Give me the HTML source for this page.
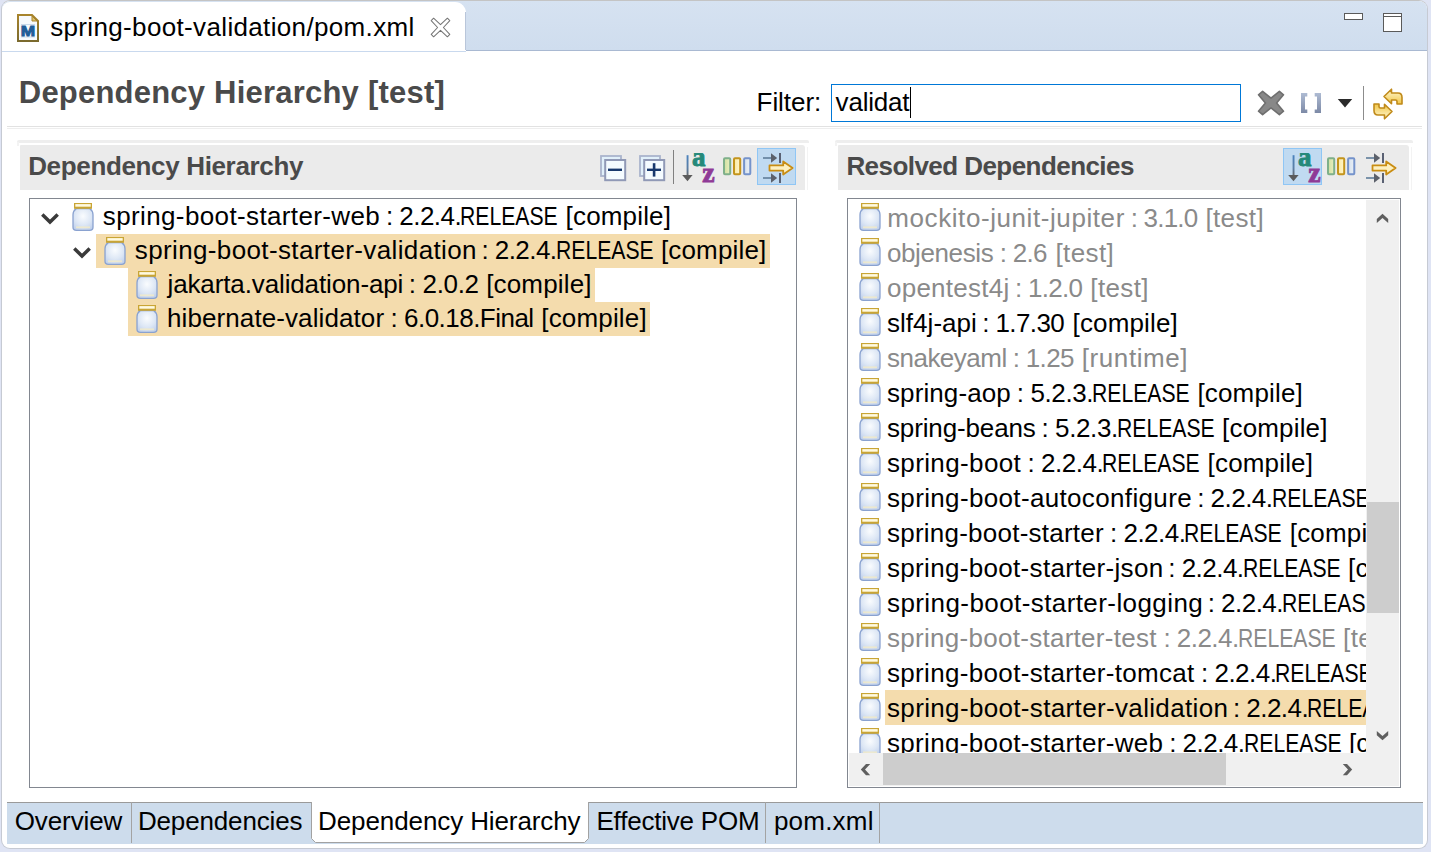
<!DOCTYPE html>
<html><head><meta charset="utf-8"><title>spring-boot-validation/pom.xml</title>
<style>
html,body{margin:0;padding:0;}
body{width:1431px;height:852px;position:relative;overflow:hidden;background:#dfe4f4;font-family:"Liberation Sans",sans-serif;}
.abs{position:absolute;}
.t{position:absolute;white-space:pre;line-height:0;height:0;display:block;}
.jar{position:absolute;}
.clip{position:absolute;overflow:hidden;}
</style></head><body>
<svg width="0" height="0" style="position:absolute">
<defs>
<radialGradient id="jg" cx="0.5" cy="0.35" r="0.75"><stop offset="0" stop-color="#fafcfe"/><stop offset="0.55" stop-color="#dde7f5"/><stop offset="1" stop-color="#bccdea"/></radialGradient>
<linearGradient id="cg1" x1="0" x2="1"><stop offset="0" stop-color="#cfe0a0"/><stop offset="1" stop-color="#e9efc0"/></linearGradient>
<linearGradient id="cg2" x1="0" x2="1"><stop offset="0" stop-color="#fbe9a0"/><stop offset="1" stop-color="#fff6d0"/></linearGradient>
<linearGradient id="cg3" x1="0" x2="1"><stop offset="0" stop-color="#d5e0ee"/><stop offset="1" stop-color="#eaf0f5"/></linearGradient>
<linearGradient id="sg" x1="0" x2="0" y1="0" y2="1"><stop offset="0" stop-color="#4a82bd"/><stop offset="0.6" stop-color="#5a7ea6"/><stop offset="1" stop-color="#666"/></linearGradient>
<g id="jar">
<path d="M4.2 5.6 C1.9 7.2 1 9.2 1 11.8 L1 24.2 C1 26.3 2.5 27.3 4.4 27.3 L17.6 27.3 C19.5 27.3 21 26.3 21 24.2 L21 11.8 C21 9.2 20.1 7.2 17.8 5.6 Z" fill="url(#jg)" stroke="#8aa2d0" stroke-width="1.3"/>
<rect x="4" y="23.4" width="14" height="1.8" fill="#f6ecc4" opacity="0.75"/>
<rect x="2" y="0" width="18" height="5.8" fill="#c9a535"/>
<rect x="3.3" y="1.1" width="15.4" height="2.6" fill="#fffae0"/>
</g>
</defs></svg>

<div class="abs" style="left:1px;top:0;width:1427px;height:849px;background:#fff;border:1px solid #c6cad3;border-top-color:#c4c4c4;box-sizing:border-box;border-radius:9px;"></div>
<div class="abs" style="left:2px;top:1px;width:1425px;height:49px;background:linear-gradient(#d6e2f1,#cfddee);border-radius:8px 8px 0 0;"></div>
<div class="abs" style="left:2px;top:50px;width:1425px;height:1px;background:#a9b9d2"></div>
<div class="abs" style="left:2px;top:2px;width:464px;height:50px;background:#fff;border-radius:8px 11px 0 0;"></div>
<div class="abs" style="left:465px;top:12px;width:1px;height:38px;background:#b9c6da"></div>
<div class="abs" style="left:2px;top:51px;width:464px;height:1px;background:#c9d9ee"></div>
<svg class="abs" style="left:17px;top:14px" width="22" height="28" viewBox="0 0 22 28">
<defs><linearGradient id="fb" x1="0" x2="0" y1="0" y2="1"><stop offset="0" stop-color="#a8842c"/><stop offset="1" stop-color="#7b6a2e"/></linearGradient></defs>
<path d="M1 1 L15 1 L21 7 L21 27 L1 27 Z" fill="#f7f9fc" stroke="url(#fb)" stroke-width="2"/>
<path d="M15 2 L15 7 L20 7 Z" fill="#dcc06c" stroke="#a8842c" stroke-width="1"/>
<rect x="4" y="10" width="14" height="1" fill="#c9d9ea"/><rect x="4" y="22.5" width="14" height="1" fill="#c9d9ea"/>
<text x="3.8" y="22" font-family="Liberation Sans, sans-serif" font-weight="bold" font-size="14" textLength="14.4" lengthAdjust="spacingAndGlyphs" fill="#1f5c97" stroke="#1f5c97" stroke-width="0.9">M</text>
</svg>
<span class="t" style="left:50.2px;top:26.99px;font-size:26px;color:#000;font-weight:normal;letter-spacing:0.348px;">spring-boot-validation/pom.xml</span>
<svg class="abs" style="left:430px;top:17px" width="21" height="21" viewBox="0 0 21 21">
<path d="M1.2 3.6 L3.6 1.2 L10.5 7.6 L17.4 1.2 L19.8 3.6 L13.4 10.5 L19.8 17.4 L17.4 19.8 L10.5 13.4 L3.6 19.8 L1.2 17.4 L7.6 10.5 Z" fill="#fff" stroke="#757575" stroke-width="1.05" stroke-linejoin="round"/>
</svg>
<div class="abs" style="left:1344px;top:13px;width:19px;height:7px;background:#fff;border:1px solid #5a5a5a;box-sizing:border-box"></div>
<div class="abs" style="left:1383px;top:13px;width:19px;height:19px;background:#fff;border:1px solid #5a5a5a;box-sizing:border-box"></div>
<div class="abs" style="left:1383px;top:16px;width:19px;height:1px;background:#5a5a5a"></div>
<span class="t" style="left:18.8px;top:92.76px;font-size:31px;color:#4a4a4a;font-weight:bold;letter-spacing:0.215px;">Dependency Hierarchy [test]</span>
<span class="t" style="left:756.6px;top:101.99px;font-size:26px;color:#000;font-weight:normal;letter-spacing:-0.067px;">Filter:</span>
<div class="abs" style="left:831px;top:84px;width:410px;height:38px;box-sizing:border-box;border:1px solid #0078d7;background:#fff"></div>
<span class="t" style="left:835.6px;top:101.99px;font-size:26px;color:#000;font-weight:normal;letter-spacing:-0.2px;">validat</span>
<div class="abs" style="left:910px;top:87px;width:1px;height:31px;background:#000"></div>
<svg class="abs" style="left:1257px;top:90px" width="28" height="26" viewBox="0 0 28 26">
<path d="M1.5 4.8 L5.6 1.3 L14 8.2 L22.4 1.3 L26.5 4.8 L19.6 13 L26.5 21.2 L22.4 24.7 L14 17.8 L5.6 24.7 L1.5 21.2 L8.4 13 Z" fill="#888888" stroke="#6f6f6f" stroke-width="1.6" stroke-linejoin="round"/>
</svg>
<svg class="abs" style="left:1300px;top:92px" width="22" height="22" viewBox="0 0 22 22">
<defs><linearGradient id="bk" x1="0" x2="0" y1="0" y2="1"><stop offset="0" stop-color="#aebbd3"/><stop offset="1" stop-color="#7c89a6"/></linearGradient></defs>
<path d="M1 1 L7.3 1 L7.3 4.4 L5 4.4 L5 17.6 L7.3 17.6 L7.3 21 L1 21 Z" fill="url(#bk)"/>
<path d="M21 1 L14.7 1 L14.7 4.4 L17 4.4 L17 17.6 L14.7 17.6 L14.7 21 L21 21 Z" fill="url(#bk)"/>
</svg>
<svg class="abs" style="left:1337px;top:98px" width="16" height="10" viewBox="0 0 16 10"><path d="M0.8 1 L15.2 1 L8 9.4 Z" fill="#2a2a2a"/></svg>
<div class="abs" style="left:1363px;top:86px;width:1px;height:34px;background:#8c8c8c"></div>
<svg class="abs" style="left:1373px;top:88px" width="30" height="32" viewBox="0 0 30 32">
<defs><linearGradient id="rf" x1="0" x2="0" y1="0" y2="1"><stop offset="0" stop-color="#fff8d2"/><stop offset="1" stop-color="#f1c648"/></linearGradient></defs>
<path id="rfa" d="M11 8.5 L18.5 1.2 L18.5 5 L25 5 C27.5 5 29 6.8 29 9.5 L29 16 L24 16 L24 13.5 C24 12.5 23.5 12 22.5 12 L18.5 12 L18.5 15.8 Z" fill="url(#rf)" stroke="#c08a1a" stroke-width="1.6" stroke-linejoin="round"/>
<use href="#rfa" transform="rotate(180 15 16)"/>
</svg>
<div class="abs" style="left:7px;top:126px;width:1415px;height:1px;background:#e2e2e2"></div>
<div class="abs" style="left:7px;top:128px;width:1415px;height:1px;background:#eeeeee"></div>
<div class="abs" style="left:17px;top:140px;width:792px;height:2.5px;background:#eeeeee;border-radius:2px 2px 0 0"></div>
<div class="abs" style="left:17px;top:142px;width:2px;height:4px;background:#f3f3f3"></div>
<div class="abs" style="left:20px;top:145px;width:785px;height:45px;background:#ebebeb;border-radius:1px 3px 0 0"></div>
<div class="abs" style="left:806.5px;top:147px;width:1px;height:43px;background:#f3f3f3"></div>
<span class="t" style="left:28.2px;top:165.99px;font-size:26px;color:#4a4a4a;font-weight:bold;letter-spacing:-0.347px;">Dependency Hierarchy</span>
<svg class="abs" style="left:599.8px;top:155px" width="27" height="27" viewBox="0 0 27 27">
<rect x="1" y="1" width="20" height="20" fill="#e1f0fa" stroke="#aab4cd" stroke-width="1.8"/>
<rect x="5.2" y="5" width="20" height="20.2" fill="#f4fbff" stroke="#9099b6" stroke-width="2"/>
<rect x="8" y="13.6" width="14" height="2.4" fill="#17386d"/></svg>
<svg class="abs" style="left:638.7px;top:155px" width="27" height="27" viewBox="0 0 27 27">
<rect x="1" y="1" width="20" height="20" fill="#e1f0fa" stroke="#aab4cd" stroke-width="1.8"/>
<rect x="5.2" y="5" width="20" height="20.2" fill="#f4fbff" stroke="#9099b6" stroke-width="2"/>
<rect x="8" y="13.6" width="14" height="2.4" fill="#17386d"/><rect x="13.8" y="8.2" width="2.6" height="13.4" fill="#17386d"/></svg>
<div class="abs" style="left:673px;top:150px;width:1px;height:34px;background:#808080"></div>
<svg class="abs" style="left:682px;top:153px" width="34" height="31" viewBox="0 0 34 31">
<rect x="4.6" y="2.2" width="1.9" height="21" fill="url(#sg)"/>
<path d="M0.2 22 L10.6 22 L5.5 28.2 Z" fill="#5b5b5b"/>
<text x="10" y="12.9" font-family="Liberation Serif, serif" font-weight="bold" font-size="27" fill="#25897a" stroke="#25897a" stroke-width="0.9">a</text>
<text x="20.2" y="29.4" font-family="Liberation Serif, serif" font-weight="bold" font-size="28" fill="#8f3a96" stroke="#8f3a96" stroke-width="0.9">z</text>
</svg>
<svg class="abs" style="left:723px;top:156.6px" width="29" height="19" viewBox="0 0 29 19">
<rect x="1" y="1.2" width="6.2" height="16" rx="1" fill="url(#cg1)" stroke="#7fb08a" stroke-width="2"/>
<rect x="11" y="1.2" width="6.2" height="16" rx="1" fill="url(#cg2)" stroke="#c4941c" stroke-width="2"/>
<rect x="21.1" y="1.2" width="6.2" height="16" rx="1" fill="url(#cg3)" stroke="#7593cb" stroke-width="2"/>
</svg>
<div class="abs" style="left:757px;top:148px;width:39px;height:37px;box-sizing:border-box;background:#c0daf1;border:1px solid #8fc6f5"></div>
<svg class="abs" style="left:763px;top:153px" width="31" height="31" viewBox="0 0 31 31">
<path d="M0 5 L10 5" stroke="#5f7e9a" stroke-width="1.6"/><path d="M8 0.2 L14.2 5 L8 9.8 Z" fill="#5c616b"/><path d="M17 0 L17 10" stroke="#5a6173" stroke-width="2"/>
<path d="M0 25 L10 25" stroke="#5f7e9a" stroke-width="1.6"/><path d="M8 20.2 L14.2 25 L8 29.8 Z" fill="#5c616b"/><path d="M17 20 L17 30" stroke="#5a6173" stroke-width="2"/>
<path d="M6.5 12.4 L20.2 12.4 L20.2 8.4 L29.6 15 L20.2 21.6 L20.2 17.6 L6.5 17.6 Z" fill="#fdf0c0" stroke="#c98d12" stroke-width="1.8" stroke-linejoin="round"/>
</svg>
<div class="abs" style="left:29px;top:198px;width:768px;height:590px;box-sizing:border-box;border:1px solid #828790;background:#fff"></div>
<div class="abs" style="left:96px;top:234px;width:674px;height:34px;background:#f4dcad"></div>
<div class="abs" style="left:128px;top:268px;width:467px;height:34px;background:#f4dcad"></div>
<div class="abs" style="left:128px;top:302px;width:522px;height:34px;background:#f4dcad"></div>
<svg style="position:absolute;left:41px;top:213px" width="18" height="12" viewBox="0 0 18 12"><path d="M1.3 1.6 L9 9 L16.7 1.6" fill="none" stroke="#3a3a3a" stroke-width="3.5"/></svg>
<svg style="position:absolute;left:73px;top:247px" width="18" height="12" viewBox="0 0 18 12"><path d="M1.3 1.6 L9 9 L16.7 1.6" fill="none" stroke="#3a3a3a" stroke-width="3.5"/></svg>
<svg class="jar" style="left:72px;top:203px" width="22" height="28" viewBox="0 0 22 28"><use href="#jar"/></svg>
<svg class="jar" style="left:104px;top:237px" width="22" height="28" viewBox="0 0 22 28"><use href="#jar"/></svg>
<svg class="jar" style="left:136px;top:271px" width="22" height="28" viewBox="0 0 22 28"><use href="#jar"/></svg>
<svg class="jar" style="left:136px;top:305px" width="22" height="28" viewBox="0 0 22 28"><use href="#jar"/></svg>
<span class="t" style="left:102.8px;top:216.49px;font-size:26px;color:#000;font-weight:normal;letter-spacing:0.373px;">spring-boot-starter-web </span><span class="t" style="left:385.9px;top:216.49px;font-size:26px;color:#000;font-weight:normal;letter-spacing:-0.529px;">: 2.2.4.</span><span class="t" style="left:460.27px;top:216.49px;font-size:26px;color:#000;font-weight:normal;letter-spacing:0px;transform:scaleX(0.8137);transform-origin:0 0;">RELEASE </span><span class="t" style="left:565.6px;top:216.49px;font-size:26px;color:#000;font-weight:normal;letter-spacing:0.162px;">[compile]</span>
<span class="t" style="left:134.8px;top:250.49px;font-size:26px;color:#000;font-weight:normal;letter-spacing:0.372px;">spring-boot-starter-validation </span><span class="t" style="left:481.5px;top:250.49px;font-size:26px;color:#000;font-weight:normal;letter-spacing:-0.571px;">: 2.2.4.</span><span class="t" style="left:555.57px;top:250.49px;font-size:26px;color:#000;font-weight:normal;letter-spacing:0px;transform:scaleX(0.8137);transform-origin:0 0;">RELEASE </span><span class="t" style="left:660.9px;top:250.49px;font-size:26px;color:#000;font-weight:normal;letter-spacing:0.162px;">[compile]</span>
<span class="t" style="left:167.5px;top:284.49px;font-size:26px;color:#000;font-weight:normal;letter-spacing:-0.124px;">jakarta.validation-api </span><span class="t" style="left:408.8px;top:284.49px;font-size:26px;color:#000;font-weight:normal;letter-spacing:-0.35px;">: 2.0.2 </span><span class="t" style="left:486.2px;top:284.49px;font-size:26px;color:#000;font-weight:normal;letter-spacing:0.163px;">[compile]</span>
<span class="t" style="left:167.0px;top:318.49px;font-size:26px;color:#000;font-weight:normal;letter-spacing:0.094px;">hibernate-validator </span><span class="t" style="left:390.6px;top:318.49px;font-size:26px;color:#000;font-weight:normal;letter-spacing:-0.523px;">: 6.0.18.Final </span><span class="t" style="left:541.3px;top:318.49px;font-size:26px;color:#000;font-weight:normal;letter-spacing:0.162px;">[compile]</span>
<div class="abs" style="left:835px;top:140px;width:578px;height:2.5px;background:#eeeeee;border-radius:2px 2px 0 0"></div>
<div class="abs" style="left:835px;top:142px;width:2px;height:4px;background:#f3f3f3"></div>
<div class="abs" style="left:838px;top:145px;width:571px;height:45px;background:#ebebeb;border-radius:1px 3px 0 0"></div>
<div class="abs" style="left:1410.5px;top:147px;width:1px;height:43px;background:#f3f3f3"></div>
<span class="t" style="left:846.4px;top:165.99px;font-size:26px;color:#4a4a4a;font-weight:bold;letter-spacing:-0.555px;">Resolved Dependencies</span>
<div class="abs" style="left:1283px;top:148px;width:39px;height:37px;box-sizing:border-box;background:#c0daf1;border:1px solid #8fc6f5"></div>
<svg class="abs" style="left:1288px;top:153px" width="34" height="31" viewBox="0 0 34 31">
<rect x="4.6" y="2.2" width="1.9" height="21" fill="url(#sg)"/>
<path d="M0.2 22 L10.6 22 L5.5 28.2 Z" fill="#5b5b5b"/>
<text x="10" y="12.9" font-family="Liberation Serif, serif" font-weight="bold" font-size="27" fill="#25897a" stroke="#25897a" stroke-width="0.9">a</text>
<text x="20.2" y="29.4" font-family="Liberation Serif, serif" font-weight="bold" font-size="28" fill="#8f3a96" stroke="#8f3a96" stroke-width="0.9">z</text>
</svg>
<svg class="abs" style="left:1327px;top:156.6px" width="29" height="19" viewBox="0 0 29 19">
<rect x="1" y="1.2" width="6.2" height="16" rx="1" fill="url(#cg1)" stroke="#7fb08a" stroke-width="2"/>
<rect x="11" y="1.2" width="6.2" height="16" rx="1" fill="url(#cg2)" stroke="#c4941c" stroke-width="2"/>
<rect x="21.1" y="1.2" width="6.2" height="16" rx="1" fill="url(#cg3)" stroke="#7593cb" stroke-width="2"/>
</svg>
<svg class="abs" style="left:1366px;top:153px" width="31" height="31" viewBox="0 0 31 31">
<path d="M0 5 L10 5" stroke="#5f7e9a" stroke-width="1.6"/><path d="M8 0.2 L14.2 5 L8 9.8 Z" fill="#5c616b"/><path d="M17 0 L17 10" stroke="#5a6173" stroke-width="2"/>
<path d="M0 25 L10 25" stroke="#5f7e9a" stroke-width="1.6"/><path d="M8 20.2 L14.2 25 L8 29.8 Z" fill="#5c616b"/><path d="M17 20 L17 30" stroke="#5a6173" stroke-width="2"/>
<path d="M6.5 12.4 L20.2 12.4 L20.2 8.4 L29.6 15 L20.2 21.6 L20.2 17.6 L6.5 17.6 Z" fill="#fdf0c0" stroke="#c98d12" stroke-width="1.8" stroke-linejoin="round"/>
</svg>
<div class="abs" style="left:847px;top:198px;width:554px;height:590px;box-sizing:border-box;border:1px solid #828790;background:#fff"></div>
<div class="clip" style="left:848px;top:199px;width:517.5px;height:554px">
<svg class="jar" style="left:11px;top:4px" width="22" height="28" viewBox="0 0 22 28"><use href="#jar"/></svg>
<span class="t" style="left:39.3px;top:18.99px;font-size:26px;color:#8a8a8a;font-weight:normal;letter-spacing:0.58px;">mockito-junit-jupiter </span><span class="t" style="left:282.8px;top:18.99px;font-size:26px;color:#8a8a8a;font-weight:normal;letter-spacing:-0.817px;">: 3.1.0 </span><span class="t" style="left:357.4px;top:18.99px;font-size:26px;color:#8a8a8a;font-weight:normal;letter-spacing:0.38px;">[test]</span>
<svg class="jar" style="left:11px;top:39px" width="22" height="28" viewBox="0 0 22 28"><use href="#jar"/></svg>
<span class="t" style="left:39.0px;top:53.99px;font-size:26px;color:#8a8a8a;font-weight:normal;letter-spacing:-0.4px;">objenesis </span><span class="t" style="left:151.7px;top:53.99px;font-size:26px;color:#8a8a8a;font-weight:normal;letter-spacing:-0.675px;">: 2.6 </span><span class="t" style="left:207.5px;top:53.99px;font-size:26px;color:#8a8a8a;font-weight:normal;letter-spacing:0.38px;">[test]</span>
<svg class="jar" style="left:11px;top:74px" width="22" height="28" viewBox="0 0 22 28"><use href="#jar"/></svg>
<span class="t" style="left:39.0px;top:88.99px;font-size:26px;color:#8a8a8a;font-weight:normal;letter-spacing:0.244px;">opentest4j </span><span class="t" style="left:167.1px;top:88.99px;font-size:26px;color:#8a8a8a;font-weight:normal;letter-spacing:-0.717px;">: 1.2.0 </span><span class="t" style="left:242.3px;top:88.99px;font-size:26px;color:#8a8a8a;font-weight:normal;letter-spacing:0.38px;">[test]</span>
<svg class="jar" style="left:11px;top:109px" width="22" height="28" viewBox="0 0 22 28"><use href="#jar"/></svg>
<span class="t" style="left:39.0px;top:123.99px;font-size:26px;color:#000;font-weight:normal;letter-spacing:0.037px;">slf4j-api </span><span class="t" style="left:134.2px;top:123.99px;font-size:26px;color:#000;font-weight:normal;letter-spacing:-0.6px;">: 1.7.30 </span><span class="t" style="left:224.5px;top:123.99px;font-size:26px;color:#000;font-weight:normal;letter-spacing:0.163px;">[compile]</span>
<svg class="jar" style="left:11px;top:144px" width="22" height="28" viewBox="0 0 22 28"><use href="#jar"/></svg>
<span class="t" style="left:39.0px;top:158.99px;font-size:26px;color:#8a8a8a;font-weight:normal;letter-spacing:-0.513px;">snakeyaml </span><span class="t" style="left:164.8px;top:158.99px;font-size:26px;color:#8a8a8a;font-weight:normal;letter-spacing:-0.7px;">: 1.25 </span><span class="t" style="left:233.8px;top:158.99px;font-size:26px;color:#8a8a8a;font-weight:normal;letter-spacing:0.575px;">[runtime]</span>
<svg class="jar" style="left:11px;top:179px" width="22" height="28" viewBox="0 0 22 28"><use href="#jar"/></svg>
<span class="t" style="left:39.0px;top:193.99px;font-size:26px;color:#000;font-weight:normal;letter-spacing:0.1px;">spring-aop </span><span class="t" style="left:168.8px;top:193.99px;font-size:26px;color:#000;font-weight:normal;letter-spacing:-0.4px;">: 5.2.3.</span><span class="t" style="left:244.07px;top:193.99px;font-size:26px;color:#000;font-weight:normal;letter-spacing:0px;transform:scaleX(0.8137);transform-origin:0 0;">RELEASE </span><span class="t" style="left:349.4px;top:193.99px;font-size:26px;color:#000;font-weight:normal;letter-spacing:0.163px;">[compile]</span>
<svg class="jar" style="left:11px;top:214px" width="22" height="28" viewBox="0 0 22 28"><use href="#jar"/></svg>
<span class="t" style="left:39.0px;top:228.99px;font-size:26px;color:#000;font-weight:normal;letter-spacing:-0.136px;">spring-beans </span><span class="t" style="left:193.4px;top:228.99px;font-size:26px;color:#000;font-weight:normal;letter-spacing:-0.386px;">: 5.2.3.</span><span class="t" style="left:268.77px;top:228.99px;font-size:26px;color:#000;font-weight:normal;letter-spacing:0px;transform:scaleX(0.8137);transform-origin:0 0;">RELEASE </span><span class="t" style="left:374.1px;top:228.99px;font-size:26px;color:#000;font-weight:normal;letter-spacing:0.163px;">[compile]</span>
<svg class="jar" style="left:11px;top:249px" width="22" height="28" viewBox="0 0 22 28"><use href="#jar"/></svg>
<span class="t" style="left:39.0px;top:263.99px;font-size:26px;color:#000;font-weight:normal;letter-spacing:0.37px;">spring-boot </span><span class="t" style="left:179.6px;top:263.99px;font-size:26px;color:#000;font-weight:normal;letter-spacing:-0.486px;">: 2.2.4.</span><span class="t" style="left:254.27px;top:263.99px;font-size:26px;color:#000;font-weight:normal;letter-spacing:0px;transform:scaleX(0.8137);transform-origin:0 0;">RELEASE </span><span class="t" style="left:359.6px;top:263.99px;font-size:26px;color:#000;font-weight:normal;letter-spacing:0.163px;">[compile]</span>
<svg class="jar" style="left:11px;top:284px" width="22" height="28" viewBox="0 0 22 28"><use href="#jar"/></svg>
<span class="t" style="left:39.0px;top:298.99px;font-size:26px;color:#000;font-weight:normal;letter-spacing:0.346px;">spring-boot-autoconfigure </span><span class="t" style="left:349.2px;top:298.99px;font-size:26px;color:#000;font-weight:normal;letter-spacing:-0.529px;">: 2.2.4.</span><span class="t" style="left:423.57px;top:298.99px;font-size:26px;color:#000;font-weight:normal;letter-spacing:0px;transform:scaleX(0.8137);transform-origin:0 0;">RELEASE </span><span class="t" style="left:528.9px;top:298.99px;font-size:26px;color:#000;font-weight:normal;letter-spacing:0.162px;">[compile]</span>
<svg class="jar" style="left:11px;top:319px" width="22" height="28" viewBox="0 0 22 28"><use href="#jar"/></svg>
<span class="t" style="left:39.0px;top:333.99px;font-size:26px;color:#000;font-weight:normal;letter-spacing:0.233px;">spring-boot-starter </span><span class="t" style="left:262.1px;top:333.99px;font-size:26px;color:#000;font-weight:normal;letter-spacing:-0.529px;">: 2.2.4.</span><span class="t" style="left:336.47px;top:333.99px;font-size:26px;color:#000;font-weight:normal;letter-spacing:0px;transform:scaleX(0.8137);transform-origin:0 0;">RELEASE </span><span class="t" style="left:441.8px;top:333.99px;font-size:26px;color:#000;font-weight:normal;letter-spacing:0.162px;">[compile]</span>
<svg class="jar" style="left:11px;top:354px" width="22" height="28" viewBox="0 0 22 28"><use href="#jar"/></svg>
<span class="t" style="left:39.0px;top:368.99px;font-size:26px;color:#000;font-weight:normal;letter-spacing:0.322px;">spring-boot-starter-json </span><span class="t" style="left:320.3px;top:368.99px;font-size:26px;color:#000;font-weight:normal;letter-spacing:-0.529px;">: 2.2.4.</span><span class="t" style="left:394.67px;top:368.99px;font-size:26px;color:#000;font-weight:normal;letter-spacing:0px;transform:scaleX(0.8137);transform-origin:0 0;">RELEASE </span><span class="t" style="left:500.0px;top:368.99px;font-size:26px;color:#000;font-weight:normal;letter-spacing:0.162px;">[compile]</span>
<svg class="jar" style="left:11px;top:389px" width="22" height="28" viewBox="0 0 22 28"><use href="#jar"/></svg>
<span class="t" style="left:39.0px;top:403.99px;font-size:26px;color:#000;font-weight:normal;letter-spacing:0.415px;">spring-boot-starter-logging </span><span class="t" style="left:359.7px;top:403.99px;font-size:26px;color:#000;font-weight:normal;letter-spacing:-0.529px;">: 2.2.4.</span><span class="t" style="left:434.07px;top:403.99px;font-size:26px;color:#000;font-weight:normal;letter-spacing:0px;transform:scaleX(0.8137);transform-origin:0 0;">RELEASE </span><span class="t" style="left:539.4px;top:403.99px;font-size:26px;color:#000;font-weight:normal;letter-spacing:0.162px;">[compile]</span>
<svg class="jar" style="left:11px;top:424px" width="22" height="28" viewBox="0 0 22 28"><use href="#jar"/></svg>
<span class="t" style="left:39.0px;top:438.99px;font-size:26px;color:#8a8a8a;font-weight:normal;letter-spacing:0.283px;">spring-boot-starter-test </span><span class="t" style="left:315.4px;top:438.99px;font-size:26px;color:#8a8a8a;font-weight:normal;letter-spacing:-0.529px;">: 2.2.4.</span><span class="t" style="left:389.77px;top:438.99px;font-size:26px;color:#8a8a8a;font-weight:normal;letter-spacing:0px;transform:scaleX(0.8137);transform-origin:0 0;">RELEASE </span><span class="t" style="left:495.1px;top:438.99px;font-size:26px;color:#8a8a8a;font-weight:normal;letter-spacing:0.38px;">[test]</span>
<svg class="jar" style="left:11px;top:459px" width="22" height="28" viewBox="0 0 22 28"><use href="#jar"/></svg>
<span class="t" style="left:39.0px;top:473.99px;font-size:26px;color:#000;font-weight:normal;letter-spacing:0.328px;">spring-boot-starter-tomcat </span><span class="t" style="left:353.1px;top:473.99px;font-size:26px;color:#000;font-weight:normal;letter-spacing:-0.529px;">: 2.2.4.</span><span class="t" style="left:427.47px;top:473.99px;font-size:26px;color:#000;font-weight:normal;letter-spacing:0px;transform:scaleX(0.8137);transform-origin:0 0;">RELEASE </span><span class="t" style="left:532.8px;top:473.99px;font-size:26px;color:#000;font-weight:normal;letter-spacing:0.162px;">[compile]</span>
<div class="abs" style="left:37px;top:491px;width:600px;height:35px;background:#f4dcad"></div>
<svg class="jar" style="left:11px;top:494px" width="22" height="28" viewBox="0 0 22 28"><use href="#jar"/></svg>
<span class="t" style="left:39.0px;top:508.99px;font-size:26px;color:#000;font-weight:normal;letter-spacing:0.345px;">spring-boot-starter-validation </span><span class="t" style="left:384.9px;top:508.99px;font-size:26px;color:#000;font-weight:normal;letter-spacing:-0.529px;">: 2.2.4.</span><span class="t" style="left:459.27px;top:508.99px;font-size:26px;color:#000;font-weight:normal;letter-spacing:0px;transform:scaleX(0.8137);transform-origin:0 0;">RELEASE </span><span class="t" style="left:564.6px;top:508.99px;font-size:26px;color:#000;font-weight:normal;letter-spacing:0.162px;">[compile]</span>
<svg class="jar" style="left:11px;top:529px" width="22" height="28" viewBox="0 0 22 28"><use href="#jar"/></svg>
<span class="t" style="left:39.0px;top:543.99px;font-size:26px;color:#000;font-weight:normal;letter-spacing:0.332px;">spring-boot-starter-web </span><span class="t" style="left:321.2px;top:543.99px;font-size:26px;color:#000;font-weight:normal;letter-spacing:-0.529px;">: 2.2.4.</span><span class="t" style="left:395.57px;top:543.99px;font-size:26px;color:#000;font-weight:normal;letter-spacing:0px;transform:scaleX(0.8137);transform-origin:0 0;">RELEASE </span><span class="t" style="left:500.9px;top:543.99px;font-size:26px;color:#000;font-weight:normal;letter-spacing:0.162px;">[compile]</span>
</div>
<div class="abs" style="left:1366px;top:200px;width:33px;height:586px;background:#f0f0f0"></div>
<div class="abs" style="left:1367px;top:502px;width:32px;height:111px;background:#cdcdcd"></div>
<svg class="abs" style="left:1375px;top:212px" width="15" height="13" viewBox="0 0 15 13"><polygon points="1.8,11.1 7.5,6.0 13.2,11.1 13.2,6.9 7.5,1.8 1.8,6.9" fill="#5f5f5f"/></svg>
<svg class="abs" style="left:1375px;top:730px" width="15" height="12" viewBox="0 0 15 12"><polygon points="1.8,1 7.5,6.0 13.2,1 13.2,5.2 7.5,10.2 1.8,5.2" fill="#5f5f5f"/></svg>
<div class="abs" style="left:849px;top:753px;width:550px;height:33px;background:#f0f0f0"></div>
<div class="abs" style="left:883px;top:753px;width:343px;height:32px;background:#cdcdcd"></div>
<svg class="abs" style="left:859px;top:763px" width="13" height="14" viewBox="0 0 13 14"><polygon points="11.2,1 6.0,6.6 11.2,12.2 7.0,12.2 1.8,6.6 7.0,1" fill="#5f5f5f"/></svg>
<svg class="abs" style="left:1341px;top:763px" width="13" height="14" viewBox="0 0 13 14"><polygon points="1.8,1 7.0,6.6 1.8,12.2 6.0,12.2 11.2,6.6 6.0,1" fill="#5f5f5f"/></svg>
<div class="abs" style="left:7px;top:802px;width:1416px;height:42px;background:#cddcec;"></div>
<div class="abs" style="left:7px;top:802px;width:1416px;height:1px;background:#9a9a9a;"></div>
<svg class="abs" style="left:305px;top:798px" width="290" height="50" viewBox="305 798 290 50"><path d="M311.5 801 L311.5 838.5 L315.5 842.5 L584.5 842.5 L588.5 838.5 L588.5 801 Z" fill="#fff"/><path d="M311.5 802 L311.5 838.5 L315.5 842.5 L584.5 842.5 L588.5 838.5 L588.5 802" fill="none" stroke="#a2a2a2" stroke-width="1"/></svg>
<div class="abs" style="left:131px;top:802px;width:1px;height:41px;background:#a3a3a3"></div>
<div class="abs" style="left:765px;top:802px;width:1px;height:41px;background:#a3a3a3"></div>
<div class="abs" style="left:879px;top:802px;width:1px;height:41px;background:#a3a3a3"></div>
<span class="t" style="left:14.7px;top:821.29px;font-size:26px;color:#000;font-weight:normal;letter-spacing:-0.1px;">Overview</span>
<span class="t" style="left:137.9px;top:821.29px;font-size:26px;color:#000;font-weight:normal;letter-spacing:-0.145px;">Dependencies</span>
<span class="t" style="left:318.1px;top:821.29px;font-size:26px;color:#000;font-weight:normal;letter-spacing:-0.105px;">Dependency Hierarchy</span>
<span class="t" style="left:596.5px;top:821.29px;font-size:26px;color:#000;font-weight:normal;letter-spacing:-0.217px;">Effective POM</span>
<span class="t" style="left:773.9px;top:821.29px;font-size:26px;color:#000;font-weight:normal;letter-spacing:0.233px;">pom.xml</span>
</body></html>
